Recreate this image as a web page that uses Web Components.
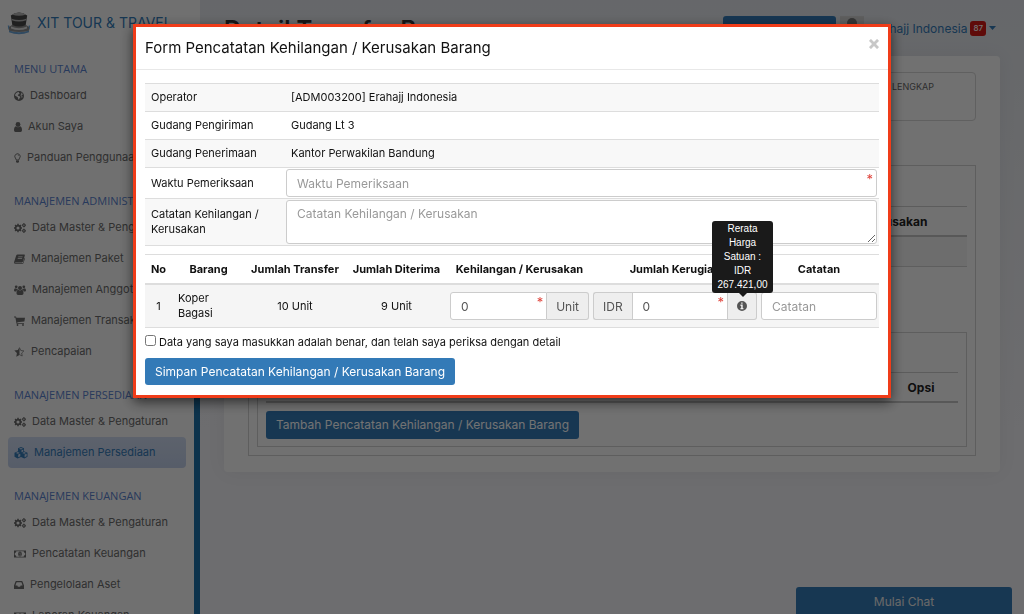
<!DOCTYPE html>
<html lang="id">
<head>
<meta charset="utf-8">
<meta name="viewport" content="width=device-width, initial-scale=1">
<title>XIT Tour &amp; Travel</title>
<style>
  html, body { margin: 0; height: 100%; }
  body { font: 11px/15px Inter, "Open Sans", sans-serif; color: #333; overflow: hidden; }
</style>
</head>
<body>
<app-shell>
  <app-sidebar slot="side">
    <nav-group heading="MENU UTAMA">
      <nav-item icon="globe">Dashboard</nav-item>
      <nav-item icon="user">Akun Saya</nav-item>
      <nav-item icon="bulb">Panduan Penggunaan</nav-item>
    </nav-group>
    <nav-group heading="MANAJEMEN ADMINISTRASI">
      <nav-item icon="cogs">Data Master &amp; Pengaturan</nav-item>
      <nav-item icon="book">Manajemen Paket</nav-item>
      <nav-item icon="users">Manajemen Anggota</nav-item>
      <nav-item icon="cart">Manajemen Transaksi</nav-item>
      <nav-item icon="star">Pencapaian</nav-item>
    </nav-group>
    <nav-group heading="MANAJEMEN PERSEDIAAN">
      <nav-item icon="cogs">Data Master &amp; Pengaturan</nav-item>
      <nav-item icon="cubes" active>Manajemen Persediaan</nav-item>
    </nav-group>
    <nav-group heading="MANAJEMEN KEUANGAN">
      <nav-item icon="cogs">Data Master &amp; Pengaturan</nav-item>
      <nav-item icon="money">Pencatatan Keuangan</nav-item>
      <nav-item icon="inbox">Pengelolaan Aset</nav-item>
      <nav-item icon="money">Laporan Keuangan</nav-item>
    </nav-group>
  </app-sidebar>
  <app-topbar slot="top">Detail Transfer Barang</app-topbar>
  <transfer-card></transfer-card>
</app-shell>
<chat-launcher>Mulai Chat</chat-launcher>
<modal-dialog>
  <span slot="title">Form Pencatatan Kehilangan / Kerusakan Barang</span>
  <loss-form></loss-form>
</modal-dialog>

<script>
const ICONS = {
  globe: [10, 10, '<path fill-rule="evenodd" d="M5 0a5 5 0 1 0 0 10A5 5 0 0 0 5 0zM3.6 1.2l1.5-.4-.4 1 .9.4-.3.9-1.1.5-.4.8.9.6 1.3.4.3.9-.8 1-.3 1-.7.5-.5-1.4-.2-1.2-1.2-.8L1 4.600 1.200 3.400 2.200 2zM7 1.400l1.200.9.7 1.500-.9-.1-.6.7.4.9.9.2-.9 1.800-.3-1.700-.9-.8.2-1.300.7-.6z"/>'],
  user: [8, 10, '<circle cx="4" cy="2.500" r="2.400"/><path d="M1.900 4.200Q4 6.400 6.100 4.200 8 4.600 8 8.200 8 10 6.500 10h-5Q0 10 0 8.200 0 4.600 1.900 4.200z"/>'],
  bulb: [7, 10, '<path fill="none" stroke="currentColor" stroke-width=".9" d="M2.200 7Q2.200 6 1.300 5A2.700 2.700 0 1 1 5.700 5Q4.800 6 4.800 7z"/><path d="M2 7.400h3v1.300L4.300 9.800H2.700L2 8.700z"/><path fill="none" stroke="currentColor" stroke-width=".5" d="M3.500 1.800q1.300 0 1.300 1.200"/>'],
  cogs: [12, 10, '<circle cx="4" cy="5" r="2.400" fill="none" stroke="currentColor" stroke-width="1.700"/><path fill="none" stroke="currentColor" stroke-width="1.500" d="M4 .8v1.400M4 7.800v1.400M0 5h1.400M6.700 5H8M1.100 2.100l1 1M6 6.900l1 1M1.100 7.900l1-1M6 3.100l1-1"/><circle cx="9.900" cy="2.200" r="1.200" fill="none" stroke="currentColor" stroke-width="1.100"/><circle cx="9.900" cy="7.800" r="1.200" fill="none" stroke="currentColor" stroke-width="1.100"/><path fill="none" stroke="currentColor" stroke-width=".9" d="M9.900 0v1M9.900 3.400v1M7.900 2.200h.8M11.100 2.200h.9M9.900 5.600v1M9.900 9v1M7.900 7.800h.8M11.100 7.800h.9"/>'],
  book: [11, 10, '<path fill-rule="evenodd" d="M3.500.5h6.800q.8.100.5 1L9 7.600q-.3.800-1.100.8H1.600q-.7.100-.6.500t.8.400h6.500q.5 0 .7-.6l1.500-5q.6.400.4 1.100L9.400 9.200q-.3.800-1.100.8H1.500Q-.2 9.700.1 8L2.200 1.500Q2.500.6 3.500.500zM4.300 2.500l-.2.700h4.400l.2-.7zM3.800 4.200l-.2.700H8l.2-.7z"/>'],
  users: [12, 10, '<circle cx="6" cy="3" r="2"/><circle cx="2.200" cy="1.800" r="1.400"/><circle cx="9.800" cy="1.800" r="1.400"/><path d="M4.300 4.700Q6 6.200 7.700 4.700 9.600 5 9.500 8.600 9.400 10 8 10H4Q2.600 10 2.500 8.600 2.400 5 4.300 4.700zM1.100 3.300q1.200.7 2.300.1.100.7.600 1.200Q2.500 5 2.200 6.600H1Q0 6.600 0 5.500 0 3.800 1.100 3.300zM10.900 3.300q-1.200.7-2.300.1-.1.700-.6 1.200 1.500.400 1.800 2H11q1 0 1-1.100 0-1.700-1.100-2.200z"/>'],
  cart: [11, 10, '<path d="M0 .5h2l.4 1.200H11L10.400 5.500 3.300 6.200l.1.700H10v.9H2.500L1.400 1.400H0z"/><circle cx="3.500" cy="9" r=".9"/><circle cx="9" cy="9" r=".9"/>'],
  star: [11, 10, '<path d="M5.500 0v7.900L2.300 9.700l.6-3.600L.3 3.600l3.600-.5z"/><path fill="none" stroke="currentColor" stroke-width=".7" d="M5.500.8l1.300 2.700 3.100.4-2.200 2.100.5 3-2.700-1.400"/>'],
  cubes: [14, 12, '<path fill-rule="evenodd" d="M7 0l3 1.200v3.100l3.500 1.500v3.900L10.300 11.500 7 9.900l-3.300 1.600L.5 9.700V5.800L4 4.300V1.200zM7 .9L5 1.700l2 .8 2-.8zM7.500 3.300v2L9.300 4.500V2.500zM3.800 5L1.800 5.900l2 .9 2-.9zM4.200 7.600v2.700l2.100-1V6.700zM10.200 5l-2 .9 2 .9 2-.9zM10.600 7.600v2.700l2.100-1.100V6.700z"/>'],
  money: [12, 10, '<path fill-rule="evenodd" d="M0 1.500h12v7H0zM2.400 2.300Q2.200 3.800.8 4v2q1.400.2 1.600 1.700h7.200Q9.800 6.200 11.200 6V4Q9.800 3.800 9.600 2.300z"/><path fill-rule="evenodd" d="M6 2.600c1.200 0 1.800 1.100 1.800 2.400S7.200 7.400 6 7.400 4.200 6.300 4.200 5 4.800 2.600 6 2.600zM5.300 4l.3.400.3-.2v1.700h-.6v.5h1.500v-.5h-.5V3.500h-.4z"/>'],
  inbox: [10, 10, '<path fill-rule="evenodd" d="M2.200 1h5.600q.5 0 .7.500L10 5.500v3.100q0 .5-.5.500h-9Q0 9.100 0 8.600V5.500l1.500-4Q1.700 1 2.200 1zM2.600 2.200L1.400 5.500h1.900l.6 1.300h2.200l.6-1.300h1.900L7.400 2.200z"/>'],
  times: [10, 10, '<path d="M2.300.3L5 3 7.700.3Q8-.1 8.400.3l1.300 1.300q.4.400 0 .7L7 5l2.700 2.700q.4.400 0 .7L8.400 9.700q-.4.400-.7 0L5 7 2.300 9.700q-.3.400-.7 0L.3 8.400q-.4-.3 0-.7L3 5 .3 2.300q-.4-.3 0-.7L1.600.3q.4-.4.7 0z"/>'],
  info: [10, 10, '<path fill-rule="evenodd" d="M5 0a5 5 0 1 0 0 10A5 5 0 0 0 5 0zM4.200 1.500h1.400v1.300H4.200zM3.500 3.600h2.200v3.300h.7v1.300H3.500V6.900h.7v-2h-.7z"/>'],
  caret: [7, 4, '<path d="M0 0h7L3.500 4z"/>'],
  hand: [10, 10, '<path d="M3 4V1.200a1 1 0 0 1 2 0V4l4 .8Q10 5 9.800 6L9 10H4L.6 6.500 1.500 5.600 3 6.500z"/>'],
  avatar: [24, 24, '<path fill="#d2d2d2" d="M0 0h24v24H0z"/><circle fill="#777" cx="12" cy="7" r="5"/><path fill="#777" d="M2 24q0-11 10-11t10 11z"/>'],
  logo: [24, 24, '<path fill="none" stroke="#6aa4d8" stroke-width="1.500" d="M1.500 14.500q0 3.500 2 5.500M22.500 14.500q0 3.500-2 5.500"/><path fill="#6aa4d8" d="M2 19.500q10 3.500 20 0v1.800Q12 25 2 21.300z"/><path fill="#8d8d8d" d="M2 16l3-2h14l3 2v3.500q-10 3-20 0z"/><path fill="#ddd" d="M4 15.500q8 3.500 16 0v2q-8 3.200-16 0z"/><path fill="#484848" d="M3.800 4.500Q12-1.500 20.200 4.500L18.700 14q-6.700 3-13.400 0z"/><path fill="#b4b4b4" d="M5 3.500Q12-.5 19 3.500q-7 2.500-14 0zM4.500 7.800q7.500 2.500 15 0l-.2 1.400q-7.300 2.500-14.600 0z"/>']
};

function define(name, html, setup) {
  const template = document.createElement('template');
  template.innerHTML = html;
  customElements.define(name, class extends HTMLElement {
    constructor() {
      super();
      this.attachShadow({ mode: 'open' }).append(template.content.cloneNode(true));
    }
    connectedCallback() { if (setup) setup(this, this.shadowRoot); }
  });
}

define('ui-icon', `<style>:host{display:inline-flex;flex:none}svg{display:block;fill:currentColor}</style>`, (el, root) => {
  if (root.querySelector('svg')) return;
  const [w, h, body] = ICONS[el.getAttribute('name')];
  root.innerHTML += `<svg width="${w}" height="${h}" viewBox="0 0 ${w} ${h}" aria-hidden="true">${body}</svg>`;
});

define('app-shell', `<style>
  :host { display: grid; grid-template-columns: 200px 1fr; height: 100vh; background: linear-gradient(#e2e5ea, #f1f1f5 70%); }
  main { min-width: 0; }
</style>
<slot name="side"></slot>
<main><slot name="top"></slot><slot></slot></main>`);

define('app-sidebar', `<style>
  :host { display: flex; flex-direction: column; background: #f9f9f9; overflow: hidden; }
  a { display: flex; align-items: center; gap: 6px; height: 41px; padding: 4px 0 0 7px; box-sizing: border-box;
      color: #337ab7; font-size: 14px; text-decoration: none; white-space: nowrap; }
  nav { flex: 1; min-height: 0; overflow: hidden; padding: 0 8px; border-right: 6px solid #1d71a8; }
</style>
<a href="#"><ui-icon name="logo"></ui-icon>XIT TOUR &amp; TRAVEL</a>
<nav><slot></slot></nav>`);

define('nav-group', `<style>
  :host { display: block; }
  h2 { margin: 0; padding: 17px 0 0 6px; font: 400 11px/22px "Open Sans", sans-serif; color: #5880cc; white-space: nowrap; }
</style>
<h2></h2><slot></slot>`, (el, root) => { root.querySelector('h2').textContent = el.getAttribute('heading'); });

define('nav-item', `<style>
  :host { display: block; }
  a { display: flex; align-items: center; gap: 6px; height: 31px; padding-left: 6px; border-radius: 4px;
      color: #6a6a6a; font-size: 11px; text-decoration: none; white-space: nowrap; }
  :host([active]) a { color: #337ab7; background: linear-gradient(#cedaf0, #c0cee8); }
</style>
<a href="#"><slot></slot></a>`, (el, root) => {
  const icon = document.createElement('ui-icon');
  icon.setAttribute('name', el.getAttribute('icon'));
  root.querySelector('a').prepend(icon);
});

define('app-topbar', `<style>
  :host { display: flex; align-items: flex-start; height: 56px; padding: 16px 28px 0 24px; box-sizing: border-box; white-space: nowrap; }
  h1 { flex: 1; margin: 0; font-size: 24px; line-height: 28px; font-weight: 600; color: #333; }
  button { width: 113px; height: 28px; padding: 0 12px; border: 0; border-radius: 3px; background: #337ab7; color: #fff; text-align: left; }
  .avatar { margin: 0 7px 0 4px; }
  a { display: flex; align-items: center; gap: 3px; height: 24px; color: #337ab7; font-size: 12px; text-decoration: none; }
  b { padding: 0 3px; border-radius: 3px; background: #d21a14; color: #fff; font-size: 8px; font-weight: 500; line-height: 15px; }
</style>
<h1><slot></slot></h1>
<button type="button"><ui-icon name="hand"></ui-icon></button>
<ui-icon class="avatar" name="avatar"></ui-icon>
<a href="#">Erahajj Indonesia <b>87</b><ui-icon name="caret"></ui-icon></a>`);

define('transfer-card', `<style>
  :host { display: block; margin: 0 24px; padding: 16px 24px; border-radius: 4px; background: #fbfbfb; box-shadow: 0 0 20px #0000000d; }
  .note { height: 49px; box-sizing: border-box; padding: 6px 41px; border: 1px solid #d4d4d4; border-radius: 4px;
          font-size: 9px; line-height: 15px; text-align: right; color: #666; }
  .panel { margin-top: 44px; padding: 40px 8px 8px; border: 1px solid #d0d0d0; }
  .inner { margin-top: 65px; padding: 39px 8px 7px; border: 1px solid #d0d0d0; }
  table { width: 100%; border-collapse: collapse; table-layout: fixed; }
  th { height: 28px; padding: 0; border-top: 1px solid #ccc; border-bottom: 2px solid #c4c4c4; font-size: 12px; font-weight: 700; color: #222; }
  td { height: 29px; padding: 0; background: #f2f2f2; border-bottom: 1px solid #d0d0d0; }
  .first th:last-child { width: 218px; }
  .inner th:last-child { width: 74px; }
  button { height: 28px; margin-top: 8px; padding: 0 10px; border: 0; border-radius: 3px; background: #337ab7; color: #fff; font: 400 12px/28px Inter, sans-serif; white-space: nowrap; }
</style>
<div class="note">PERLU DIISI DENGAN LENGKAP</div>
<div class="panel">
  <table class="first">
    <tr><th></th><th>Kehilangan / Kerusakan</th></tr>
    <tr><td></td><td></td></tr>
  </table>
  <div class="inner">
    <table><tr><th></th><th>Opsi</th></tr></table>
    <button type="button">Tambah Pencatatan Kehilangan / Kerusakan Barang</button>
  </div>
</div>`);

define('chat-launcher', `<style>
  :host { position: fixed; right: 12px; bottom: 0; width: 216px; }
  button { display: block; width: 100%; height: 27px; border: 0; border-radius: 3px 3px 0 0; background: #337ab7; color: #e8e8e8; font: 400 12px/27px Inter, sans-serif; }
</style>
<button type="button"><slot></slot></button>`);

define('modal-dialog', `<style>
  :host { position: fixed; inset: 0; padding: 24px 16px; background: rgba(0, 0, 0, .55); overflow: hidden; }
  section { max-width: 758px; margin: 0 auto; box-sizing: border-box; border: 3px solid #f03c19; background: #fff; box-shadow: 0 4px 12px rgba(0, 0, 0, .6); color: #111; }
  header { display: flex; align-items: center; justify-content: space-between; height: 42px; padding: 0 9px; border-bottom: 1px solid #e8e8e8; }
  h2 { margin: 0; font-size: 15px; line-height: 20px; font-weight: 400; }
  button { display: flex; padding: 0; margin-bottom: 8px; border: 0; background: none; color: #c8c8c8; }
  .body { padding: 13px 9px 10px; }
</style>
<section role="dialog" aria-labelledby="t">
  <header><h2 id="t"><slot name="title"></slot></h2><button type="button" aria-label="Tutup"><ui-icon name="times"></ui-icon></button></header>
  <div class="body"><slot></slot></div>
</section>`);

define('hint-tip', `<style>
  :host { position: relative; display: inline-flex; }
  .tip { position: absolute; left: 50%; bottom: 18px; width: 51px; margin-left: -30px; padding: 1px 5px; border-radius: 3px;
         background: #1a1a1a; color: #fff; font: 10px/14px "Liberation Sans", sans-serif; text-align: center; }
  .tip::after { content: ""; position: absolute; top: 100%; left: 50%; margin-left: -4px; border: 4px solid transparent; border-top-color: #1a1a1a; border-bottom: 0; }
</style>
<ui-icon name="info"></ui-icon><span class="tip" role="tooltip"><slot></slot></span>`);

define('loss-form', `<style>
  :host { display: block; }
  table { width: 100%; border-collapse: collapse; table-layout: fixed; }
  td, th { padding: 0 6px; border-top: 1px solid #ddd; text-align: left; font-weight: 400; }
  .info { border-bottom: 1px solid #ddd; margin-bottom: 8px; }
  .info col:first-child { width: 140px; }
  .info tr { height: 28px; }
  .info tr.field { height: 31px; }
  .info tr.area { height: 47px; }
  .info tr:nth-child(odd) { background: #f8f8f8; }
  .info .control { padding: 0 2px 0 1px; }
  .wrap { position: relative; flex: 1; min-width: 0; }
  .wrap.req::after { content: "*"; position: absolute; top: 3px; right: 4px; color: #e0443c; font-size: 13px; line-height: 15px; }
  input.text, textarea { display: block; width: 100%; height: 28px; box-sizing: border-box; margin: 0; padding: 0 10px; border: 1px solid #ccc;
    border-radius: 3px; background: #fff; color: #555; font: 400 12px/18px Inter, sans-serif; outline: 0; }
  textarea { height: 44px; padding: 4px 10px; resize: vertical; }
  ::placeholder { color: #999; opacity: 1; }
  .items { border-bottom: 1px solid #ddd; margin-bottom: 6px; }
  .items th { height: 28px; padding: 0; text-align: center; font-weight: 700; white-space: nowrap; border-bottom: 2px solid #ddd; }
  .items td { height: 42px; padding: 0 2px; border: 0; background: #f5f5f5; text-align: center; }
  .items td.name { padding: 0 6px; text-align: left; }
  .group { display: flex; height: 28px; }
  .group > span { display: flex; align-items: center; padding: 0 9px; box-sizing: border-box; border: 1px solid #ccc; background: #eee; color: #555; font-size: 12px; }
  .group > span:first-child { border-right: 0; border-radius: 3px 0 0 3px; }
  .group > span:last-child { border-left: 0; border-radius: 0 3px 3px 0; }
  .group .wrap:first-child input { border-radius: 3px 0 0 3px; }
  .group .wrap:not(:first-child) input { border-radius: 0; }
  .agree { display: flex; align-items: center; gap: 3px; height: 16px; margin-bottom: 8px; }
  .agree input { width: 11px; height: 11px; margin: 0 0 3px; }
  .save { display: block; height: 27px; padding: 0 10px; border: 0; border-radius: 3px; background: #337ab7; color: #fff; font: 400 12px/27px Inter, sans-serif; white-space: nowrap; }
</style>
<form>
  <table class="info">
    <colgroup><col><col></colgroup>
    <tr><th>Operator</th><td>[ADM003200] Erahajj Indonesia</td></tr>
    <tr><th>Gudang Pengiriman</th><td>Gudang Lt 3</td></tr>
    <tr><th>Gudang Penerimaan</th><td>Kantor Perwakilan Bandung</td></tr>
    <tr class="field"><th><label for="time">Waktu Pemeriksaan</label></th><td class="control"><div class="wrap req"><input class="text" id="time" placeholder="Waktu Pemeriksaan"></div></td></tr>
    <tr class="area"><th><label for="note">Catatan Kehilangan / Kerusakan</label></th><td class="control"><textarea id="note" placeholder="Catatan Kehilangan / Kerusakan"></textarea></td></tr>
  </table>
  <table class="items">
    <colgroup><col style="width:27px"><col style="width:73px"><col style="width:100px"><col style="width:103px"><col style="width:143px"><col style="width:168px"><col></colgroup>
    <tr><th>No</th><th>Barang</th><th>Jumlah Transfer</th><th>Jumlah Diterima</th><th id="qty">Kehilangan / Kerusakan</th><th id="cost">Jumlah Kerugian</th><th id="memo">Catatan</th></tr>
    <tr>
      <td>1</td><td class="name">Koper Bagasi</td><td>10 Unit</td><td>9 Unit</td>
      <td><div class="group"><div class="wrap req"><input class="text" aria-labelledby="qty" value="0"></div><span>Unit</span></div></td>
      <td><div class="group"><span>IDR</span><div class="wrap req"><input class="text" aria-labelledby="cost" value="0"></div><span><hint-tip>Rerata Harga Satuan : IDR 267.421,00</hint-tip></span></div></td>
      <td><input class="text" aria-labelledby="memo" placeholder="Catatan"></td>
    </tr>
  </table>
  <div class="agree"><input type="checkbox" id="ok"><label for="ok">Data yang saya masukkan adalah benar, dan telah saya periksa dengan detail</label></div>
  <button class="save" type="button">Simpan Pencatatan Kehilangan / Kerusakan Barang</button>
</form>`);
</script>
</body>
</html>
